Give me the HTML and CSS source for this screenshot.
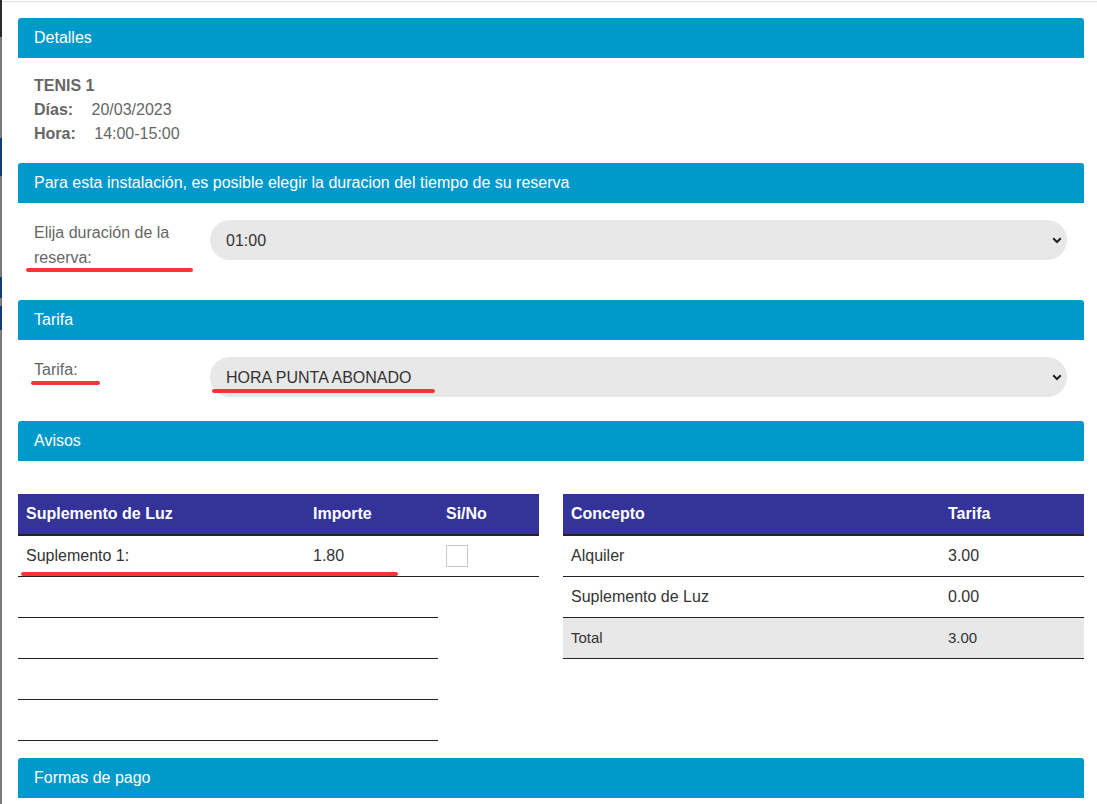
FILE: index.html
```html
<!DOCTYPE html>
<html lang="es">
<head>
<meta charset="utf-8">
<title>Reserva</title>
<link rel="stylesheet" href="styles.css">
</head>
<body>
<div class="page">
  <div class="backdrop"></div>
  <div class="modal">
    <section class="panel">
      <div class="panel-head">Detalles</div>
      <div class="panel-body details">
        <div class="line strong">TENIS 1</div>
        <div class="line"><span class="lbl">Días:</span> 20/03/2023</div>
        <div class="line"><span class="lbl">Hora:</span> 14:00-15:00</div>
      </div>
    </section>

    <section class="panel">
      <div class="panel-head">Para esta instalación, es posible elegir la duracion del tiempo de su reserva</div>
      <div class="panel-body form-body pb-30">
        <div class="form-row">
          <label class="form-label">Elija duración de la reserva:</label>
          <div class="select-wrap">
            <select class="select"><option>01:00</option></select>
            <svg class="chev" width="10" height="7" viewBox="0 0 10 7"><path d="M1.2 1.2 L5 5 L8.8 1.2" fill="none" stroke="#222" stroke-width="2"/></svg>
          </div>
        </div>
      </div>
    </section>

    <section class="panel">
      <div class="panel-head">Tarifa</div>
      <div class="panel-body form-body pb-24">
        <div class="form-row">
          <label class="form-label">Tarifa:</label>
          <div class="select-wrap">
            <select class="select"><option>HORA PUNTA ABONADO</option></select>
            <svg class="chev" width="10" height="7" viewBox="0 0 10 7"><path d="M1.2 1.2 L5 5 L8.8 1.2" fill="none" stroke="#222" stroke-width="2"/></svg>
          </div>
        </div>
      </div>
    </section>

    <section class="panel">
      <div class="panel-head">Avisos</div>
      <div class="panel-body tables-body">
        <table class="tbl tbl-left">
          <colgroup><col class="c1"><col class="c2"><col class="c3"></colgroup>
          <thead><tr><th>Suplemento de Luz</th><th>Importe</th><th>Si/No</th></tr></thead>
          <tbody>
            <tr><td>Suplemento 1:</td><td>1.80</td><td><input type="checkbox" class="chk"></td></tr>
            <tr><td></td><td></td></tr>
            <tr><td></td><td></td></tr>
            <tr><td></td><td></td></tr>
            <tr><td></td><td></td></tr>
          </tbody>
        </table>
        <table class="tbl tbl-right">
          <colgroup><col class="r1"><col class="r2"></colgroup>
          <thead><tr><th>Concepto</th><th>Tarifa</th></tr></thead>
          <tbody>
            <tr><td>Alquiler</td><td>3.00</td></tr>
            <tr><td>Suplemento de Luz</td><td>0.00</td></tr>
            <tr class="total"><td>Total</td><td>3.00</td></tr>
          </tbody>
        </table>
      </div>
    </section>

    <section class="panel">
      <div class="panel-head">Formas de pago</div>
    </section>

    <span class="mark m1"></span>
    <span class="mark m2"></span>
    <span class="mark m3"></span>
    <span class="mark m4"></span>
  </div>
</div>
</body>
</html>
```

FILE: styles.css
```css
* { box-sizing: border-box; }
html, body { margin: 0; padding: 0; background: #fff; }
body {
  font-family: "Liberation Sans", Arial, sans-serif;
  font-size: 16px;
  color: #333;
  overflow: hidden;
}
.page {
  display: flex;
  height: 804px;
}
.backdrop {
  width: 2px;
  flex: 0 0 2px;
  background: linear-gradient(to bottom,
    #2b2b2b 0, #2b2b2b 37px,
    #7b7b7b 37px, #7b7b7b 138px,
    #123d70 138px, #123d70 176px,
    #7b7b7b 176px, #7b7b7b 277px,
    #123d70 277px, #123d70 298px,
    #7b7b7b 298px, #7b7b7b 306px,
    #123d70 306px, #123d70 330px,
    #7b7b7b 330px, #7b7b7b 804px);
}
.modal {
  position: relative;
  flex: 1;
  margin-top: 1px;
  border-top: 1px solid #e2e2e2;
  padding: 16px 13px 0 16px;
  background: #fff;
}
.panel-head {
  height: 40px;
  line-height: 40px;
  padding: 0 16px;
  background: #0099cc;
  color: #fff;
  border-radius: 3px 3px 0 0;
  white-space: nowrap;
}
.details {
  padding: 16px 16px 17px;
  color: #666;
}
.details .line { line-height: 24px; }
.details .strong { font-weight: bold; }
.details .lbl { font-weight: bold; margin-right: 14px; }

.form-body { padding: 17px 17px 0 16px; }
.pb-30 { padding-bottom: 30px; }
.pb-24 { padding-bottom: 24px; }
.form-row {
  display: flex;
  align-items: flex-start;
  gap: 16px;
}
.form-label {
  width: 160px;
  flex: 0 0 160px;
  line-height: 25px;
  color: #666;
}
.select-wrap {
  position: relative;
  flex: 1;
}
.select {
  -webkit-appearance: none;
  appearance: none;
  display: block;
  width: 100%;
  height: 40px;
  border: none;
  border-radius: 20px;
  background: #e8e8e8;
  padding: 0 16px;
  font-family: "Liberation Sans", Arial, sans-serif;
  font-size: 16px;
  color: #333;
  outline: none;
}
.chev {
  position: absolute;
  right: 5px;
  top: 17px;
  pointer-events: none;
}

.tables-body {
  display: flex;
  align-items: flex-start;
  gap: 24px;
  padding: 33px 0 17px;
}
.tbl {
  width: 521px;
  border-collapse: collapse;
  table-layout: fixed;
}
.tbl-left .c1 { width: 287px; }
.tbl-left .c2 { width: 133px; }
.tbl-left .c3 { width: 101px; }
.tbl-right .r1 { width: 377px; }
.tbl-right .r2 { width: 144px; }
.tbl th {
  background: #333399;
  color: #fff;
  font-weight: bold;
  text-align: left;
  height: 41px;
  padding: 0 8px;
  border-bottom: 2px solid #222;
}
.tbl td {
  height: 41px;
  padding: 0 8px;
  border-bottom: 1px solid #222;
  color: #333;
  vertical-align: middle;
}
.tbl tr.total td {
  background: #e8e8e8;
  font-size: 15px;
}
.chk {
  -webkit-appearance: none;
  appearance: none;
  display: block;
  width: 22px;
  height: 22px;
  margin: 0;
  border: 1px solid #c8c8c8;
  background: #fff;
  border-radius: 0;
}

.mark {
  position: absolute;
  height: 4px;
  background: #ff3333;
  border-radius: 2px;
}
.m1 { left: 24px; top: 266px; width: 167px; }
.m2 { left: 29px; top: 379px; width: 69px; }
.m3 { left: 210px; top: 387px; width: 223px; }
.m4 { left: 19px; top: 570px; width: 377px; }
```
